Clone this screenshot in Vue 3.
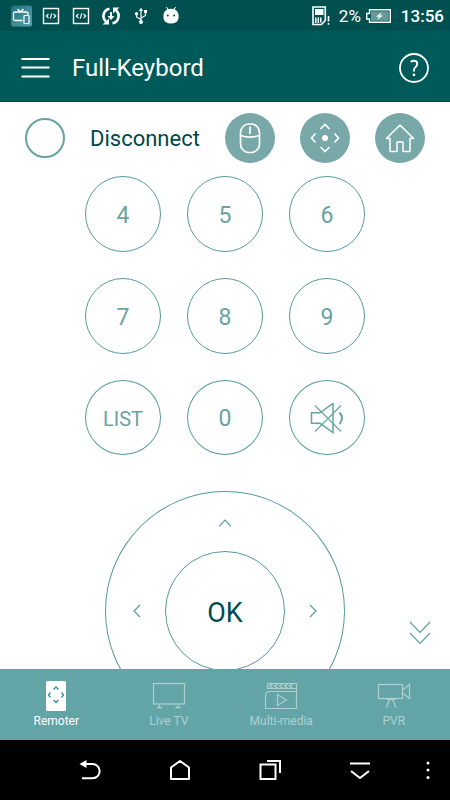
<script setup>
import { ref } from 'vue'

const digitRows = ['4', '5', '6', '7', '8', '9']
const tabs = [
  { id: 'remoter', label: 'Remoter' },
  { id: 'live', label: 'Live TV' },
  { id: 'media', label: 'Multi-media' },
  { id: 'pvr', label: 'PVR' },
]
const activeTab = ref('remoter')
</script>

<template>
  <div class="screen">
    <div class="status">
      <div class="status-icons">
        <svg width="22" height="22" viewBox="0 0 22 22" fill="none">
          <defs>
            <linearGradient id="tile" x1="0" y1="0" x2="1" y2="1">
              <stop offset="0" stop-color="#236f7d" />
              <stop offset="1" stop-color="#56a4b0" />
            </linearGradient>
          </defs>
          <rect x="1" y="0.5" width="21" height="21" rx="2.5" fill="url(#tile)" />
          <path d="M12.5 15.5H5Q3.5 15.5 3.5 14V8.500Q3.500 7 5 7H16.500Q18 7 18 8.500V10M7.500 4L10.500 6.800L13.500 4" stroke="#fff" stroke-width="1.300" />
          <rect x="14" y="10.500" width="5" height="8" rx="0.800" fill="#3d8b98" stroke="#fff" stroke-width="1.200" />
        </svg>
        <svg v-for="n in 2" :key="n" width="22" height="22" viewBox="0 0 22 22" fill="none" stroke="#fff">
          <rect x="3.500" y="3.500" width="15" height="15" stroke-width="1.400" />
          <path d="M8.500 8.800L6.300 11L8.500 13.200M13.500 8.800L15.700 11L13.500 13.200M11.800 8.300L10.200 13.700" stroke-width="1.200" />
        </svg>
        <svg width="22" height="22" viewBox="0 0 22 22" fill="none" stroke="#fff" stroke-width="2.600">
          <path d="M9.500 3.700A7.500 7.500 0 0 0 5.800 16.500M12.500 18.300A7.500 7.500 0 0 0 16.200 5.500" />
          <path d="M2.500 19.500H9V13.500ZM19.500 2.500H13V8.500Z" fill="#fff" stroke="none" />
          <path d="M11 7V12" stroke-width="2" />
          <path d="M7.500 11H14.500L11 15Z" fill="#fff" stroke="none" />
        </svg>
        <svg width="22" height="22" viewBox="0 0 22 22" fill="none" stroke="#fff" stroke-width="1.200">
          <path d="M11 5V17M11 14.500L6.500 12V9M11 13L15.500 10.500V7.500" />
          <path d="M8.800 6L11 2.800L13.200 6Z" fill="#fff" stroke="none" />
          <circle cx="11" cy="17" r="2" fill="#fff" stroke="none" />
          <circle cx="6.500" cy="8.800" r="1.700" fill="#fff" stroke="none" />
          <rect x="14" y="5" width="3" height="3" fill="#fff" stroke="none" />
        </svg>
        <svg width="22" height="22" viewBox="0 0 22 22">
          <path d="M3.500 10Q4 5.500 7.500 4.500L6 2.200L6.700 1.800L8.400 4.100Q11 3.300 13.600 4.100L15.300 1.800L16 2.200L14.500 4.500Q18 5.500 18.500 10V13.500Q17.500 18.500 11 18.500T3.500 13.500Z" fill="#fff" />
          <circle cx="7.800" cy="10.500" r="1" fill="#005252" />
          <circle cx="14.200" cy="10.500" r="1" fill="#005252" />
        </svg>
      </div>
      <div class="status-info">
        <svg width="19" height="20" viewBox="0 0 19 20" fill="none" stroke="#fff">
          <path d="M1 1H13.300V14.500L9.500 18.500H1Z" stroke-width="1.600" />
          <rect x="3" y="3" width="8.500" height="6" fill="#fff" stroke="none" />
          <path d="M3.800 11.500V17M6.300 11.500V17M8.800 11.500V16.500" stroke-width="1.500" />
          <path d="M16.500 10V15.500M16.500 17V18.800" stroke-width="1.600" />
        </svg>
        <span class="percent">2%</span>
        <svg class="battery" width="25" height="14" viewBox="0 0 25 14">
          <path d="M3.500 0.700H24.300V13.300H3.500V10H0.700V4.500H3.500Z" fill="none" stroke="#fff" stroke-width="1.400" />
          <rect x="5" y="2.300" width="17.800" height="9.500" fill="#669a99" />
          <path d="M16 3L10 7.700H13L11 11.200L17 6.500H14Z" fill="#fff" />
        </svg>
        <span class="clock">13:56</span>
      </div>
    </div>

    <header class="header">
      <button class="plain" aria-label="Menu">
        <svg width="29" height="20" viewBox="0 0 29 20" stroke="#fff" stroke-width="2">
          <path d="M0.500 1H28.500M0.500 9.500H28.500M0.500 18.500H28.500" />
        </svg>
      </button>
      <h1 class="title">Full-Keybord</h1>
      <button class="plain" aria-label="Help">
        <svg width="30" height="30" viewBox="0 0 30 30" fill="none" stroke="#fff">
          <circle cx="15" cy="15" r="14" stroke-width="1.800" />
          <path d="M11.800 9Q13 7.800 15 7.800Q18.200 7.800 18.200 10.800Q18.200 12.600 16.600 14.100Q15 15.500 15 17V18.500" stroke-width="1.900" />
          <circle cx="15" cy="21.800" r="1.400" fill="#fff" stroke="none" />
        </svg>
      </button>
    </header>

    <main class="main">
      <div class="toolbar">
        <button class="plain connect"><span class="ring"></span>Disconnect</button>
        <div class="modes">
          <button class="mode" aria-label="Mouse">
            <svg width="50" height="50" viewBox="0 0 50 50" fill="none" stroke="#fff" stroke-width="1.700">
              <rect x="15.500" y="11" width="19" height="28.500" rx="8.500" />
              <path d="M15.500 22.500Q25 25.700 34.500 22.500M25 13.500V21" />
            </svg>
          </button>
          <button class="mode" aria-label="Direction pad">
            <svg width="50" height="50" viewBox="0 0 50 50" fill="none" stroke="#fff" stroke-width="1.600">
              <path d="M20.500 16L25 11.500L29.500 16M20.500 34L25 38.500L29.500 34M15.500 20.500L11.500 25L15.500 29.500M34.500 20.500L38.500 25L34.500 29.500" />
              <circle cx="25" cy="25" r="3" fill="#fff" stroke="none" />
            </svg>
          </button>
          <button class="mode" aria-label="Home">
            <svg width="50" height="50" viewBox="0 0 50 50" fill="none" stroke="#fff" stroke-width="1.500" stroke-linejoin="round">
              <path d="M25 12L11.500 25.500H15V38.500H22V29H28V38.500H35V25.500H38.500Z" />
            </svg>
          </button>
        </div>
      </div>

      <div class="keypad">
        <button v-for="d in digitRows" :key="d" class="key">{{ d }}</button>
        <button class="key short word">LIST</button>
        <button class="key short">0</button>
        <button class="key short" aria-label="Mute">
          <svg width="34" height="32" viewBox="0 0 34 32" fill="none" stroke="#65a5a3">
            <path d="M1.500 9.800H10L23 0.500V29.500L10 20.300H1.500Z" stroke-width="1.500" />
            <path d="M29.500 9.500Q34.500 15 29.500 21" stroke-width="2" />
            <path d="M5 2.500L31 28.500M31 2.500L5 28.500" stroke-width="1.100" />
          </svg>
        </button>
      </div>

      <div class="dpad">
        <button class="plain up" aria-label="Up">
          <svg width="14" height="8" viewBox="0 0 14 8"><path d="M1 7.300L7 1L13 7.300" /></svg>
        </button>
        <button class="plain left" aria-label="Left">
          <svg width="8" height="14" viewBox="0 0 8 14"><path d="M7 1L1 7L7 13" /></svg>
        </button>
        <button class="ok">OK</button>
        <button class="plain right" aria-label="Right">
          <svg width="8" height="14" viewBox="0 0 8 14"><path d="M1 1L7 7L1 13" /></svg>
        </button>
        <button class="plain down" aria-label="Down">
          <svg width="14" height="8" viewBox="0 0 14 8"><path d="M1 0.700L7 7L13 0.700" /></svg>
        </button>
      </div>

      <button class="plain more" aria-label="More keys">
        <svg width="22" height="24" viewBox="0 0 22 24" fill="none" stroke="#569c9a" stroke-width="1.100">
          <path d="M1 1L11 11.500L21 1M1 12L11 22.500L21 12" />
        </svg>
      </button>
    </main>

    <nav class="tabs">
      <button v-for="t in tabs" :key="t.id" class="tab" :class="{ active: activeTab === t.id }" @click="activeTab = t.id">
        <svg v-if="t.id === 'remoter'" width="34" height="32" viewBox="0 0 34 32" fill="none">
          <rect x="7" y="1" width="20" height="30" rx="1.500" fill="#fff" />
          <path d="M14.500 9.500L17 7L19.500 9.500M14.500 20L17 22.500L19.500 20M11.500 12.500L9.500 15L11.500 17.500M22.500 12.500L24.500 15L22.500 17.500" stroke="#318e8d" stroke-width="1.300" />
        </svg>
        <svg v-else-if="t.id === 'live'" width="34" height="32" viewBox="0 0 34 32" fill="none" stroke="currentColor">
          <rect x="1.500" y="3.500" width="31" height="20.500" stroke-width="1.200" />
          <path d="M7.500 24V27M26 24V27" />
          <path d="M5 27.500H10M23.500 27.500H28.500" stroke-width="1.600" />
        </svg>
        <svg v-else-if="t.id === 'media'" width="34" height="32" viewBox="0 0 34 32" fill="none" stroke="currentColor" stroke-width="1.200">
          <path d="M3.500 3.500H32.500V28.500H1.500V15.500Q1.500 11.500 5.500 11.500H32.500M3.500 3.500V8.500H32.500" />
          <path d="M9 3.500L5.500 6L9 8.500M14 3.500L10.500 6L14 8.500M19 3.500L15.500 6L19 8.500M24 3.500L20.500 6L24 8.500M29 3.500L25.500 6L29 8.500" stroke-width="1.500" />
          <path d="M13.500 14.500V25.500L22.500 20Z" />
        </svg>
        <svg v-else width="34" height="32" viewBox="0 0 34 32" fill="none" stroke="currentColor" stroke-width="1.200">
          <rect x="1.500" y="4.500" width="24" height="14" />
          <path d="M25.500 10L32.500 4.500V18.500L25.500 13M9.500 19.500H18.500M12.500 19.500L9.500 27.500M15.500 19.500L19 27.500" />
        </svg>
        <span>{{ t.label }}</span>
      </button>
    </nav>

    <div class="system">
      <button class="plain back" aria-label="Back">
        <svg width="22" height="22" viewBox="0 0 22 22" fill="none" stroke="#fff" stroke-width="2">
          <path d="M5 5H13.500A6.800 6.800 0 0 1 13.500 19.300H3" />
          <path d="M0.500 5L7.500 1V9Z" fill="#fff" stroke="none" />
        </svg>
      </button>
      <button class="plain" aria-label="Home screen">
        <svg width="22" height="22" viewBox="0 0 22 22" fill="none" stroke="#fff" stroke-width="2" stroke-linejoin="round">
          <path d="M2 20V8.500L11 2L20 8.500V20Z" />
        </svg>
      </button>
      <button class="plain" aria-label="Recent apps">
        <svg width="22" height="22" viewBox="0 0 22 22" fill="none" stroke="#fff" stroke-width="2">
          <rect x="1.500" y="5.500" width="15" height="14.500" />
          <path d="M8 2H21V14" />
        </svg>
      </button>
      <button class="plain" aria-label="Hide keyboard">
        <svg width="22" height="22" viewBox="0 0 22 22" fill="none" stroke="#fff" stroke-width="2">
          <path d="M1 4.500H21M2 12L11 19L20 12" />
        </svg>
      </button>
      <button class="plain" aria-label="Options">
        <svg width="4" height="22" viewBox="0 0 4 22" fill="#fff">
          <circle cx="2" cy="4" r="1.500" /><circle cx="2" cy="11" r="1.500" /><circle cx="2" cy="18.500" r="1.500" />
        </svg>
      </button>
    </div>
  </div>
</template>

<style>
body {
  background: #fff;
}
</style>

<style scoped>
.screen {
  display: flex;
  flex-direction: column;
  height: 100vh;
  font-family: Roboto, "Liberation Sans", sans-serif;
}
button {
  padding: 0;
  font-family: inherit;
  cursor: pointer;
}
svg {
  display: block;
}
.plain {
  border: 0;
  background: none;
}
.status {
  display: flex;
  align-items: center;
  justify-content: space-between;
  flex: none;
  height: 31px;
  padding: 0 6px 0 10px;
  background: #005050;
  color: #fff;
}
.status-icons {
  display: flex;
  gap: 8px;
}
.status-info {
  display: flex;
  align-items: center;
  font-size: 17px;
  line-height: 20px;
}
.percent {
  margin-left: 8px;
}
.battery {
  margin: 0 10px 0 5px;
}
.clock {
  font-weight: 500;
}
.header {
  display: flex;
  align-items: center;
  flex: none;
  box-sizing: border-box;
  height: 71px;
  padding: 4px 21px 0;
  border-bottom: 1px solid #004344;
  background: #005a5a;
}
.title {
  flex: 1;
  margin: 0 0 0 22px;
  font-size: 24px;
  font-weight: 400;
  line-height: 30px;
  color: #fff;
}
.main {
  position: relative;
  flex: 1;
  min-height: 0;
  overflow: hidden;
}
.toolbar {
  display: flex;
  align-items: center;
  justify-content: space-between;
  padding: 11px 25px 0;
}
.connect {
  display: flex;
  align-items: center;
  gap: 25px;
  font-size: 22px;
  color: #004849;
}
.ring {
  box-sizing: border-box;
  width: 40px;
  height: 40px;
  border: 2px solid #65a3a1;
  border-radius: 50%;
}
.modes {
  display: flex;
  gap: 25px;
}
.mode {
  width: 50px;
  height: 50px;
  border: 0;
  border-radius: 50%;
  background: #78a9a8;
}
.keypad {
  display: grid;
  grid-template-columns: repeat(3, 76px);
  justify-content: center;
  gap: 26px;
  margin-top: 13px;
}
.key {
  display: flex;
  align-items: center;
  justify-content: center;
  height: 76px;
  padding-top: 2px;
  border: 1px solid #559b99;
  border-radius: 50%;
  background: none;
  font-size: 23px;
  color: #6aa3a1;
}
.short {
  height: 75px;
}
.word {
  font-size: 20px;
}
.dpad {
  display: grid;
  grid-template: 60px 120px 60px / 60px 120px 60px;
  grid-template-areas: ". up ." "left ok right" ". down .";
  width: 240px;
  margin: 36px auto 0;
  border-radius: 50%;
  box-shadow: inset 0 0 0 1px #559b99;
}
.dpad svg {
  margin: auto;
  fill: none;
  stroke: #569c9a;
  stroke-width: 1.2px;
}
.up {
  grid-area: up;
  padding-top: 4px;
}
.left {
  grid-area: left;
  padding-left: 4px;
}
.right {
  grid-area: right;
  padding-right: 4px;
}
.down {
  grid-area: down;
  padding-bottom: 4px;
}
.ok {
  grid-area: ok;
  padding-top: 4px;
  border: 1px solid #559b99;
  border-radius: 50%;
  background: none;
  font-size: 27px;
  color: #004c4d;
}
.more {
  position: absolute;
  right: 19px;
  bottom: 24px;
}
.tabs {
  display: grid;
  grid-template-columns: repeat(4, 1fr);
  flex: none;
  height: 71px;
  background: #63a4a6;
}
.tab {
  display: flex;
  flex-direction: column;
  align-items: center;
  gap: 1px;
  padding-top: 11px;
  border: 0;
  background: none;
  font-size: 12px;
  line-height: 16px;
  color: #afd0d1;
}
.active {
  color: #fff;
}
.system {
  display: grid;
  grid-template-columns: 1fr 2fr 2fr 2fr 2fr 1fr;
  flex: none;
  height: 60px;
  background: #000;
}
.system svg {
  margin: auto;
}
.back {
  grid-column: 2;
}
</style>
